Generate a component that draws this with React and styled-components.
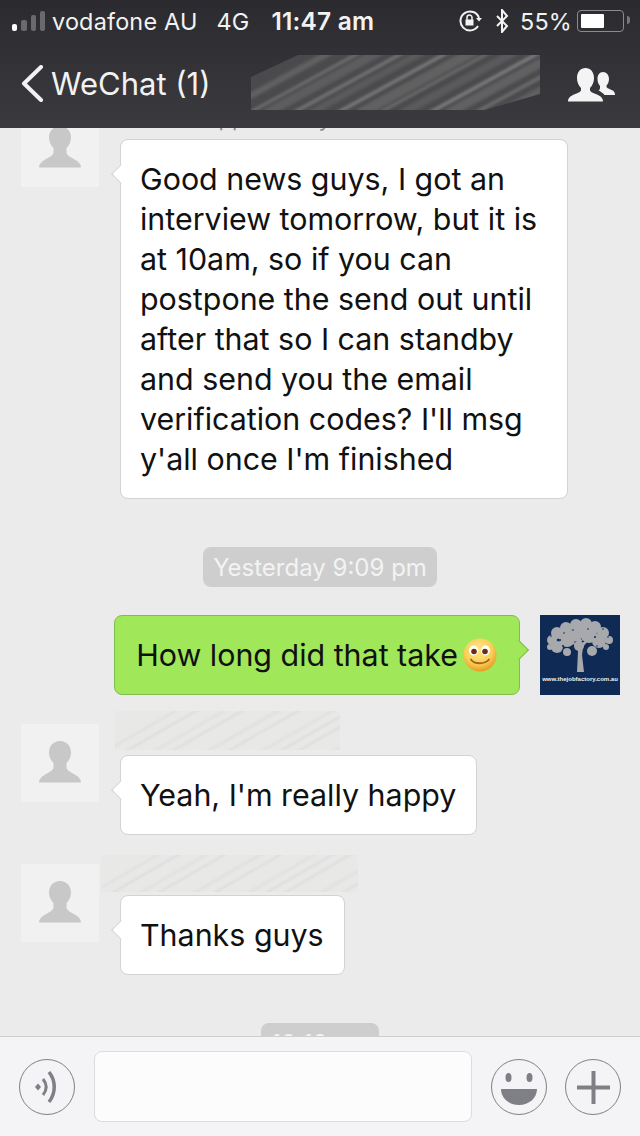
import styled, { createGlobalStyle } from 'styled-components';

const GlobalStyle = createGlobalStyle`
    html, body {
        margin: 0;
        padding: 0;
        background: #ebebeb;
    }
    * {
        box-sizing: border-box;
    }
`;

const Page = styled.div`
    width: 640px;
    height: 1136px;
    display: flex;
    flex-direction: column;
    overflow: hidden;
    font-family: Inter, "Liberation Sans", sans-serif;
    color: #111;
`;

const Header = styled.header`
    height: 128px;
    flex: none;
    display: flex;
    flex-direction: column;
    color: #f2f2f2;
    background: linear-gradient(#2b2a2f, #3b3b3f);
`;

const StatusBar = styled.div`
    height: 42px;
    padding: 0 16px 0 12px;
    display: flex;
    align-items: center;
    font-size: 23.4px;
    letter-spacing: .2px;
`;

const Signal = styled.div`
    width: 33px;
    height: 20px;
    margin-right: 7px;
    display: flex;
    align-items: flex-end;
    gap: 4px;
`;

const SignalBar = styled.span`
    width: 5.500px;
    border-radius: 2px;
    height: ${props => props.$h}px;
    background: ${props => props.$on ? '#fff' : '#6a6a6d'};
`;

const Carrier = styled.span`
    margin-right: 19px;
`;

const Network = styled.span`
    margin-right: 22px;
`;

const Clock = styled.span`
    font-size: 24.500px;
    font-weight: 600;
`;

const StatusRight = styled.div`
    margin-left: auto;
    display: flex;
    align-items: center;
`;

const BluetoothIcon = styled.svg`
    margin-left: 11px;
`;

const Percent = styled.span`
    margin: 0 5px 0 10px;
`;

const Battery = styled.div`
    width: 47px;
    height: 22px;
    padding: 3px;
    border: 1.5px solid #8b8b8e;
    border-radius: 4px;
    position: relative;
    &::before {
        content: '';
        display: block;
        width: 23px;
        height: 100%;
        background: #fff;
        border-radius: 1px;
    }
    &::after {
        content: '';
        position: absolute;
        right: -7px;
        top: 5px;
        width: 3px;
        height: 8px;
        background: #77777a;
        border-radius: 0 3px 3px 0;
    }
`;

const NavBar = styled.nav`
    flex: 1;
    display: flex;
    align-items: flex-start;
    padding: 13px 25px 0 21px;
`;

const BackLink = styled.a`
    display: flex;
    align-items: center;
    gap: 7px;
    width: 230px;
    height: 56px;
    font-size: 31px;
    color: #f2f2f2;
`;

const Redacted = styled.div`
    flex: none;
    display: flex;
    width: ${props => props.$w}px;
    height: ${props => props.$h}px;
    margin-left: ${props => props.$left || 0}px;
    margin-bottom: ${props => props.$below || 0}px;
`;

const GroupButton = styled.button`
    margin: 13px 0 0 auto;
    padding: 0;
    width: 47px;
    height: 34px;
    border: 0;
    background: none;
    color: #f4f4f4;
`;

const ChatArea = styled.main`
    flex: 1;
    min-height: 0;
    overflow: hidden;
    display: flex;
    flex-direction: column;
    background: #ebebeb;
`;

const ScrollContent = styled.div`
    margin-top: -19px;
    display: flex;
    flex-direction: column;
`;

const Row = styled.div`
    display: flex;
    align-items: flex-start;
    gap: 21px;
    padding: 0 21px;
    margin-top: ${props => props.$top || 0}px;
`;

const OutRow = styled(Row)`
    justify-content: flex-end;
    padding: 0 20px 0 0;
    gap: 20px;
`;

const Avatar = styled.div`
    flex: none;
    width: 78px;
    height: 78px;
    margin-top: ${props => props.$top || 0}px;
    background: #f1f1f1;
    color: #c8c8c8;
    display: flex;
`;

const Column = styled.div`
    display: flex;
    flex-direction: column;
    align-items: flex-start;
`;

const SenderName = styled.div`
    height: 30px;
    font-size: 22px;
    line-height: 19px;
    color: #8d8d8d;
    padding-left: 72px;
    white-space: nowrap;
`;

const Bubble = styled.div`
    position: relative;
    width: ${props => props.$w ? `${props.$w}px` : 'auto'};
    padding: 19px 20px 19px 19px;
    font-size: 30.400px;
    line-height: 40px;
    background: #fff;
    border: 1px solid #d3d3d3;
    border-radius: 8px;
    &::before {
        content: '';
        position: absolute;
        left: -7px;
        top: 27px;
        width: 13px;
        height: 13px;
        background: #fff;
        border-left: 1px solid #d3d3d3;
        border-bottom: 1px solid #d3d3d3;
        transform: rotate(45deg);
    }
`;

const OutBubble = styled(Bubble)`
    display: flex;
    align-items: center;
    gap: 5px;
    height: 80px;
    padding: 0 22px 0 21px;
    background: #a0e75a;
    border-color: #7fbd50;
    &::before {
        left: auto;
        right: -7px;
        background: #a0e75a;
        border: 0;
        border-top: 1px solid #7fbd50;
        border-right: 1px solid #7fbd50;
    }
`;

const TimePill = styled.div`
    align-self: center;
    flex: none;
    width: ${props => props.$w}px;
    height: 40px;
    margin-top: ${props => props.$top}px;
    border-radius: 8px;
    background: #cecece;
    color: #f3f3f3;
    font-size: 24px;
    line-height: 41px;
    text-align: center;
`;

const BrandTile = styled.div`
    flex: none;
    width: 80px;
    height: 80px;
    background: #0f2a54;
    display: flex;
    flex-direction: column;
    align-items: center;
`;

const BrandText = styled.span`
    margin-top: 2px;
    font-family: "Liberation Sans", sans-serif;
    font-size: 6px;
    font-weight: 700;
    line-height: 8px;
    color: #f0f0f0;
    white-space: nowrap;
`;

const Composer = styled.footer`
    height: 100px;
    flex: none;
    position: relative;
    display: flex;
    align-items: flex-start;
    padding: 14px 19px 0;
    background: #f4f4f6;
    border-top: 1px solid #cfcfcf;
`;

const RoundButton = styled.button`
    flex: none;
    width: 56px;
    height: 56px;
    margin: 8px ${props => props.$right || 0}px 0 0;
    padding: 0;
    display: flex;
    align-items: center;
    justify-content: center;
    border: 1px solid #7f7f86;
    border-radius: 50%;
    background: none;
    color: #7f7f86;
`;

const MessageInput = styled.div`
    flex: none;
    width: 378px;
    height: 71px;
    margin-right: 19px;
    background: #fcfcfd;
    border: 1px solid #dcdce0;
    border-radius: 8px;
`;

// blurred-out names: soft diagonal streaks, each [start x at the bottom, line width, opacity]
const darkStreaks = [
    [-34, 6, .3], [-4, 2, .7], [14, 9, .25], [40, 3, .65], [58, 7, .2], [84, 3, .75], [108, 10, .3],
    [126, 2, .6], [150, 8, .22], [176, 3, .8], [196, 9, .3], [222, 3, .55], [246, 7, .28], [268, 3, .7],
];

const lightStreaks = [
    [-14, 2, .45], [6, 1.500, .7], [34, 3, .3], [52, 1.500, .65], [88, 3, .35], [108, 1.500, .7], [142, 3, .3],
    [160, 1.500, .7], [178, 2, .55], [214, 3, .3], [236, 1.500, .6],
];

const RedactionArt = ({ w, h, dark }) => {
    const streaks = dark ? darkStreaks : lightStreaks;
    const rise = h * 2.1;
    const shape = dark
        ? `0,22 47,0 ${w},0 ${w},${h - 16} ${w - 55},${h} 0,${h}`
        : `0,0 ${w},0 ${w},${h} 0,${h}`;
    const clipId = `redaction-clip-${w}`;
    return (
        <svg width={w} height={h} viewBox={`0 0 ${w} ${h}`}>
            <defs>
                <clipPath id={clipId}><polygon points={shape} /></clipPath>
                <filter id={`redaction-blur-${w}`}><feGaussianBlur stdDeviation={dark ? 1.5 : 1.2} /></filter>
            </defs>
            <polygon points={shape} fill={dark ? '#4a4a4c' : '#e8e8e7'} />
            <g clipPath={`url(#${clipId})`}>
                <g filter={`url(#redaction-blur-${w})`} stroke={dark ? '#949496' : '#d2d2d2'}>
                    {streaks.map(([x, width, opacity]) => (
                        <line key={x} x1={x} y1={h + 4} x2={x + rise} y2={-4} strokeWidth={width} opacity={opacity} />
                    ))}
                </g>
            </g>
        </svg>
    );
};

const PersonIcon = () => (
    <svg width="78" height="78" viewBox="0 0 78 78" fill="currentColor">
        <path d="M39 17c-6.500 0-11 5-11 11.500 0 4.500 2 8 4.500 10.500v4.500c0 3-5 5-9 7.500-3.500 2-5.500 4.500-5.500 7.500h42c0-3-2-5.500-5.500-7.500-4-2.500-9-4.500-9-7.500V39c2.500-2.500 4.500-6 4.500-10.500C50 22 45.500 17 39 17z"/>
    </svg>
);

const canopy = [
    [12, 25, 5], [17, 18, 6], [26, 13, 6], [36, 10, 6], [46, 9, 6], [55, 12, 6], [63, 18, 6], [69, 25, 4],
    [10, 32, 3], [17, 32, 6], [27, 24, 8], [38, 19, 8], [49, 20, 8], [59, 26, 7], [66, 32, 3], [27, 37, 4], [52, 36, 5], [39, 31, 5],
];

const canopyGaps = [
    [14, 39, 1.500], [20, 25, 1], [31, 33, 1.500], [46, 31, 1.500], [55, 22, 1], [60, 36, 1.500], [33, 15, .8], [48, 14, .8],
    [24, 18, .8], [63, 14, .8], [11, 21, .8], [23, 31, 1], [68, 22, .8], [41, 24, .8], [57, 31, .8],
];

const TreeLogo = () => (
    <svg width="80" height="58" viewBox="0 0 80 58" fill="#a7a9ad">
        <filter id="tree-soften"><feGaussianBlur stdDeviation=".35" /></filter>
        <g filter="url(#tree-soften)">
            {canopy.map(([cx, cy, r]) => <circle key={`${cx}-${cy}`} cx={cx} cy={cy} r={r} />)}
            {canopyGaps.map(([cx, cy, r]) => <circle key={`${cx}-${cy}`} cx={cx} cy={cy} r={r} fill="#0f2a54" />)}
            <path d="M38 36l-3-6-9-4 11 2 2-10 3 10 10-7-9 11-1 8 2 17H37z"/>
        </g>
    </svg>
);

const SmileyEmoji = () => (
    <svg width="34" height="34" viewBox="0 0 34 34">
        <defs>
            <radialGradient id="smiley-face" cx="45%" cy="35%" r="65%">
                <stop offset="0" stopColor="#ffe88e"/>
                <stop offset=".65" stopColor="#f9cf55"/>
                <stop offset="1" stopColor="#e79b25"/>
            </radialGradient>
        </defs>
        <circle cx="17" cy="17" r="16.500" fill="url(#smiley-face)"/>
        <ellipse cx="10.500" cy="12.500" rx="4.500" ry="5" fill="#fff"/>
        <ellipse cx="22.500" cy="12.500" rx="4.500" ry="5" fill="#fff"/>
        <circle cx="11" cy="13.500" r="2.800" fill="#6b2b12"/>
        <circle cx="22" cy="13.500" r="2.800" fill="#6b2b12"/>
        <path d="M8 21.500c3 5 14 5 18 0" fill="none" stroke="#a8621a" strokeWidth="1.800" strokeLinecap="round"/>
    </svg>
);

const messageLines = `Good news guys, I got an interview tomorrow, but it is at 10am, so if you can postpone the send out until after that so I can standby and send you the email verification codes? I'll msg y'all once I'm finished`;

const App = () => {
    return (
        <Page>
            <GlobalStyle />
            <Header>
                <StatusBar>
                    <Signal>
                        <SignalBar $h={7} $on />
                        <SignalBar $h={11} />
                        <SignalBar $h={16} />
                        <SignalBar $h={20} />
                    </Signal>
                    <Carrier>vodafone AU</Carrier>
                    <Network>4G</Network>
                    <Clock>11:47 am</Clock>
                    <StatusRight>
                        <svg width="24" height="22" viewBox="0 0 24 22" fill="none" stroke="#f2f2f2" strokeWidth="2">
                            <path d="M20 8A9.500 9.500 0 1 0 19 16"/>
                            <path d="M17 8h6l-3 3.500z" fill="#f2f2f2" stroke="none"/>
                            <rect x="6.500" y="9.500" width="8" height="6" fill="#f2f2f2" stroke="none"/>
                            <path d="M8 10V7.500a2.500 2.500 0 0 1 5 0V10" strokeWidth="1.500"/>
                        </svg>
                        <BluetoothIcon width="16" height="24" viewBox="0 0 16 24" fill="none" stroke="#f2f2f2" strokeWidth="2">
                            <path d="M3 7l10 10-5 6V1l5 6L3 17"/>
                        </BluetoothIcon>
                        <Percent>55%</Percent>
                        <Battery />
                    </StatusRight>
                </StatusBar>
                <NavBar>
                    <BackLink>
                        <svg width="23" height="37" viewBox="0 0 23 37" fill="none" stroke="currentColor" strokeWidth="4" strokeLinecap="round" strokeLinejoin="round">
                            <path d="M20 2L3 18.500 20 35"/>
                        </svg>
                        WeChat (1)
                    </BackLink>
                    <Redacted $w={289} $h={55}><RedactionArt w={289} h={55} dark /></Redacted>
                    <GroupButton aria-label="Group members">
                        <svg width="47" height="34" viewBox="0 0 47 34" fill="currentColor">
                            <path d="M17.500 0c-5 0-8.500 4-8.500 10 0 4 1.500 7.500 4 10v2c0 2-3.500 3-7 4.500C3 28 0 29.500 0 33.500h35c0-4-3-5.500-6-7-3.500-1.500-7-2.500-7-4.500v-2c2.500-2.500 4-6 4-10 0-6-3.500-10-8.500-10z"/>
                            <path d="M35 4c-3.500 0-5.500 3-5.500 7 0 3 1 5 2.500 7v2c0 1-.5 2-1.500 2.500 2 1 4.500 2.500 6 4.500h10.500c0-3.500-2-4.500-4.500-5.500-2-1-4-1.500-4-3v-1c1.500-1.500 2.500-4 2.500-6.500 0-4-2.500-7-6-7z"/>
                        </svg>
                    </GroupButton>
                </NavBar>
            </Header>

            <ChatArea>
                <ScrollContent>
                    <Row>
                        <Avatar><PersonIcon /></Avatar>
                        <Column>
                            <SenderName>Sapphire Day</SenderName>
                            <Bubble $w={448}>{messageLines}</Bubble>
                        </Column>
                    </Row>

                    <TimePill $w={234} $top={48}>Yesterday 9:09 pm</TimePill>

                    <OutRow $top={28}>
                        <OutBubble>
                            How long did that take
                            <SmileyEmoji />
                        </OutBubble>
                        <BrandTile>
                            <TreeLogo />
                            <BrandText>www.thejobfactory.com.au</BrandText>
                        </BrandTile>
                    </OutRow>

                    <Row $top={16}>
                        <Avatar $top={13}><PersonIcon /></Avatar>
                        <Column>
                            <Redacted $w={225} $h={39} $left={-5} $below={5}><RedactionArt w={225} h={39} /></Redacted>
                            <Bubble>Yeah, I'm really happy</Bubble>
                        </Column>
                    </Row>

                    <Row $top={20}>
                        <Avatar $top={9}><PersonIcon /></Avatar>
                        <Column>
                            <Redacted $w={257} $h={37} $left={-19} $below={3}><RedactionArt w={257} h={37} /></Redacted>
                            <Bubble>Thanks guys</Bubble>
                        </Column>
                    </Row>

                    <TimePill $w={118} $top={48}>10:12 am</TimePill>
                </ScrollContent>
            </ChatArea>

            <Composer>
                <RoundButton $right={19} aria-label="Voice">
                    <svg width="26" height="36" viewBox="0 0 26 36" fill="none" stroke="currentColor" strokeWidth="3">
                        <path d="M4 14.500l3 3.500-3 3.500-3-3.500z" fill="currentColor" stroke="none"/>
                        <path d="M9 10c4 5 4 11 0 16"/>
                        <path d="M15 3c7 9 7 21 0 30" strokeWidth="3.500"/>
                    </svg>
                </RoundButton>
                <MessageInput />
                <RoundButton $right={18} aria-label="Emoji">
                    <svg width="44" height="44" viewBox="0 0 44 44" fill="currentColor">
                        <ellipse cx="11.500" cy="12.500" rx="3" ry="4.500"/>
                        <ellipse cx="32.500" cy="12.500" rx="3" ry="4.500"/>
                        <path d="M4 24h36c0 9-8 16-18 16S4 33 4 24z"/>
                    </svg>
                </RoundButton>
                <RoundButton aria-label="More">
                    <svg width="33" height="33" viewBox="0 0 33 33" fill="currentColor">
                        <rect x="0" y="14.500" width="33" height="4"/>
                        <rect x="14.500" y="0" width="4" height="33"/>
                    </svg>
                </RoundButton>
            </Composer>
        </Page>
    );
};

export default App;
